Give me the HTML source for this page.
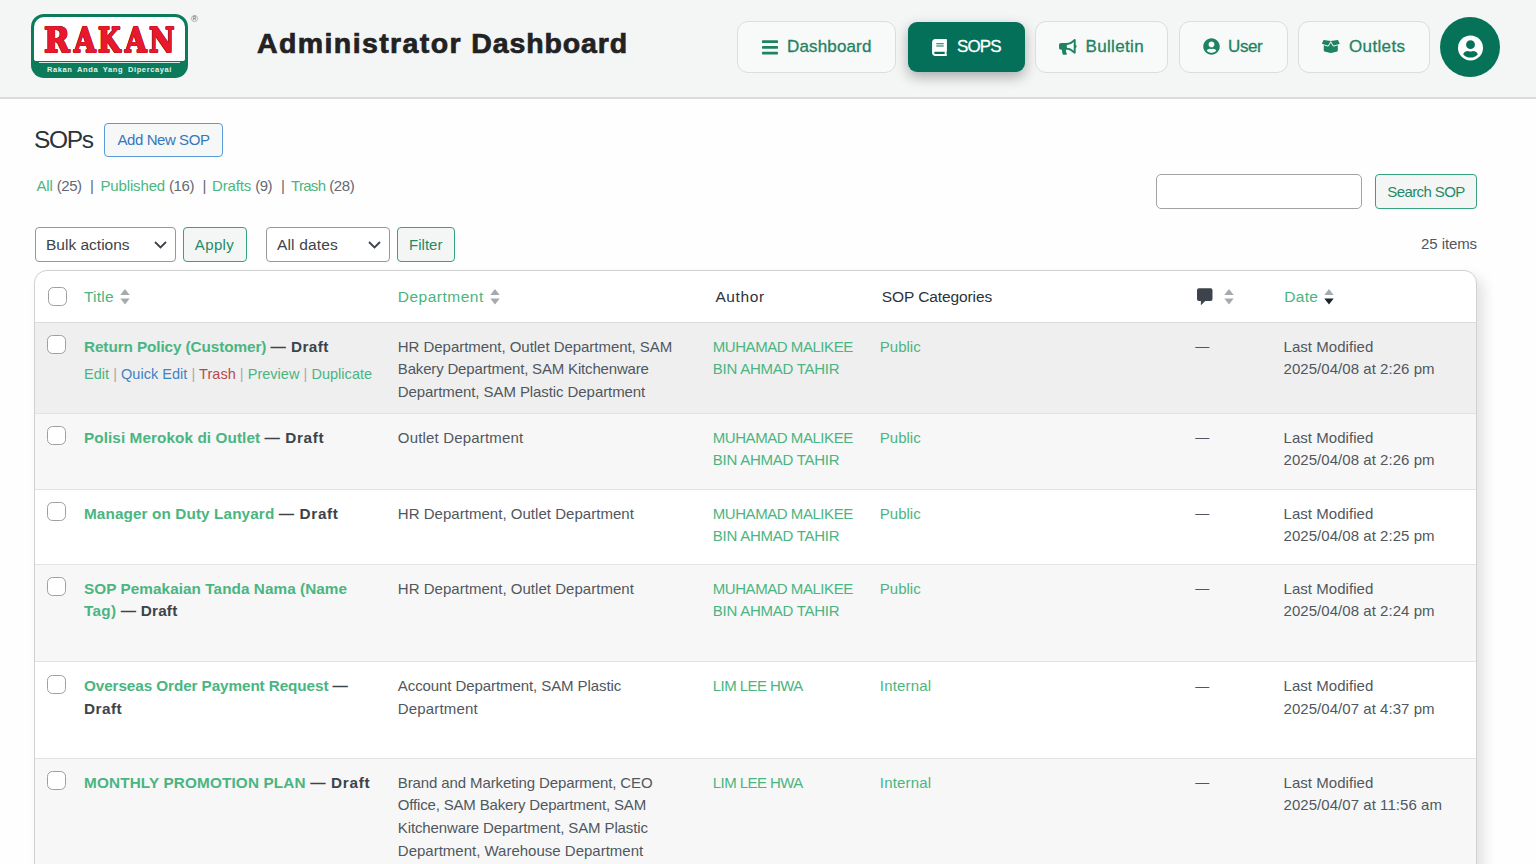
<!DOCTYPE html>
<html lang="en">
<head>
<meta charset="utf-8">
<title>SOPs - Administrator Dashboard</title>
<style>
*{box-sizing:border-box;margin:0;padding:0}
html,body{width:1536px;height:864px;overflow:hidden;background:#fefefe}
body{font-family:"Liberation Sans",sans-serif;font-size:15px;color:#3c434a;position:relative}
a{text-decoration:none;color:inherit}
header{position:absolute;left:0;top:0;width:1536px;height:99px;background:#f4f5f5;border-bottom:2px solid #dadbdb}
.logo{position:absolute;left:31px;top:13.500px;width:157px;height:64px;border-radius:13px;background:#0b7b5c}
.logo .plate{position:absolute;left:3px;top:3px;right:3px;height:44px;background:#fff;border-radius:10px 10px 2px 2px}
.logo .name{position:absolute;left:0;top:4.600px;width:157px;height:44px;font-family:"DejaVu Serif",serif;font-weight:700;font-size:34px;line-height:44px;color:#e8192c;white-space:nowrap;-webkit-text-stroke:1.300px #e8192c;text-shadow:.9px 0 0 #7c1220,-.9px 0 0 #7c1220,0 .8px 0 #7c1220,0 -.8px 0 #7c1220,.6px .6px 0 #7c1220,-.6px .6px 0 #7c1220,.6px -.6px 0 #7c1220,-.6px -.6px 0 #7c1220}
.logo .name i{position:absolute;top:0;font-style:normal;transform-origin:0 0}
.logo .rule{position:absolute;left:8px;right:8px;top:48.300px;height:1.500px;background:#d4e9e1}
.logo .tag{position:absolute;left:0;top:51.500px;width:157px;text-align:center;font-size:7.500px;line-height:10px;font-weight:700;color:#e3f1ec;letter-spacing:.62px;white-space:nowrap;word-spacing:2px}
.reg{position:absolute;left:191px;top:13px;font-size:9.500px;color:#666}
.brand{position:absolute;left:257px;top:22.700px;font-size:28.5px;line-height:40px;font-weight:700;color:#222;white-space:nowrap;letter-spacing:1.2px;-webkit-text-stroke:.7px #222}
nav a{position:absolute;top:21px;height:52px;border:1px solid #dcdddd;border-radius:11px;background:#f8f9f9;color:#1f8363;font-size:17px;line-height:50px;white-space:nowrap}
nav a span{position:absolute;top:0;-webkit-text-stroke:.3px currentColor}
nav a svg{position:absolute}
nav a.on{top:22px;height:50px;border:none;background:#05705a;color:#fff;box-shadow:0 5px 13px rgba(0,0,0,.3);border-radius:9px}
.avatar{position:absolute;left:1440px;top:17px;width:60px;height:60px;border-radius:50%;background:#067358}
.avatar svg{position:absolute;left:17.5px;top:18px}
main h1{position:absolute;left:34px;top:122px;font-size:24.5px;line-height:36px;font-weight:400;color:#2c3338;letter-spacing:-1.35px}
.add{position:absolute;left:104px;top:123px;width:119px;height:34px;border:1.5px solid #5a9ad8;border-radius:4px;background:#f6f7f7;color:#3577bd;font-size:15px;line-height:31px;text-align:center;letter-spacing:-.43px}
.subsubsub{position:absolute;left:0;top:175px;list-style:none;font-size:15px;line-height:22px;color:#646970;white-space:nowrap;letter-spacing:-.15px}
.subsubsub li{position:absolute;top:0}
.subsubsub a{color:#4ab581}
.subsubsub span{letter-spacing:-.45px}
.subsubsub i{font-style:normal;position:absolute;top:0}
.search input{position:absolute;left:1156px;top:174px;width:205.500px;height:34.500px;border:1px solid #a0a3a6;border-radius:5px;background:#fff}
.btn{position:absolute;height:35px;border:1.5px solid #36a181;border-radius:4px;background:#f4f6f5;color:#1f8a68;font-size:15px;line-height:34px;text-align:center;white-space:nowrap}
.sel{position:absolute;top:227px;height:34.500px;border:1px solid #95989c;border-radius:4px;background:#fff;color:#3c434a;font-size:15.500px;line-height:34px;padding-left:10px;white-space:nowrap}
.sel svg{position:absolute;top:13px}
.count{position:absolute;right:59px;top:233px;font-size:15px;line-height:22px;color:#50575e;letter-spacing:-.1px}
.tbl{position:absolute;left:34px;top:269.500px;width:1443px;height:620px;border:1px solid #d0d1d3;border-radius:13px 13px 0 0;background:#fff;box-shadow:7px 7px 13px rgba(0,0,0,.11);overflow:hidden}
table{border-collapse:collapse;table-layout:fixed;width:1441px;font-size:15px;line-height:22.600px}
th{height:52px;text-align:left;font-weight:400;font-size:15.500px;color:#2c3338;padding:2px 0 0 12.500px;border-bottom:1px solid #dcdcde;white-space:nowrap;vertical-align:middle;position:relative}
th a{color:#4ab581}
td{vertical-align:top;padding:12.800px 0 0 12.500px;white-space:nowrap;border-bottom:1px solid #e2e3e4;color:#50575e}
td a{color:#4ab581}
tr.alt td{background:#f7f7f7}
tr.hov td{background:#efeff0}
.cb{display:block;width:19px;height:19px;border:1.300px solid #9c9fa3;border-radius:5.500px;background:#fff}
td.c{padding:12.400px 0 0 12.200px}
th.c{padding:0 0 0 12.500px}
td:nth-child(3),td:nth-child(4),td:nth-child(5){padding-left:11.800px}
td:nth-child(6){font-size:14px;padding-left:12.300px;padding-top:12.300px}
.t{font-weight:700;color:#3aab7a;font-size:15.300px}
.t b{color:#3c434a}
.ra{font-size:14.500px;color:#a7aaad;display:block;margin-top:5px;font-weight:400;letter-spacing:.03px}
.ra .q{color:#3f83c4}
.ra .d{color:#b8494b}
.dt{letter-spacing:.05px}
.srt{display:inline-block;width:10px;height:16px;vertical-align:-3px;margin-left:6px}
</style>
</head>
<body>
<header>
  <a class="logo"><span class="plate"></span><span class="name"><i style="left:13.300px;transform:scaleX(.91)">R</i><i style="left:43px;transform:scaleX(.82)">A</i><i style="left:67px;transform:scaleX(.76)">K</i><i style="left:94.300px;transform:scaleX(.82)">A</i><i style="left:118.300px;transform:scaleX(.82)">N</i></span><span class="rule"></span><span class="tag">Rakan Anda Yang Dipercayai</span></a>
  <span class="reg">®</span>
  <h1 class="brand"><span style="letter-spacing:1.400px">Administrator</span> <span style="letter-spacing:.9px">Dashboard</span></h1>
  <nav>
    <a style="left:737px;width:159px"><svg style="left:24px;top:17.500px" width="17" height="15" viewBox="0 0 17 15"><g fill="#1f8363"><rect x="0" y="0.3" width="16" height="2.7" rx=".6"/><rect x="0" y="6" width="16" height="2.7" rx=".6"/><rect x="0" y="11.7" width="16" height="2.7" rx=".6"/></g></svg><span style="left:49px;letter-spacing:.15px">Dashboard</span></a>
    <a class="on" style="left:908px;width:117px"><svg style="left:24px;top:16.5px" width="15" height="17" viewBox="0 0 448 512"><path fill="#fff" d="M448 360V24c0-13.300-10.700-24-24-24H96C43 0 0 43 0 96v320c0 53 43 96 96 96h328c13.300 0 24-10.700 24-24v-16c0-7.500-3.500-14.300-8.900-18.700-4.200-15.400-4.200-59.300 0-74.700 5.400-4.300 8.900-11.100 8.900-18.600zM128 134c0-3.300 2.700-6 6-6h212c3.300 0 6 2.700 6 6v20c0 3.300-2.700 6-6 6H134c-3.300 0-6-2.700-6-6v-20zm0 64c0-3.300 2.700-6 6-6h212c3.300 0 6 2.700 6 6v20c0 3.300-2.700 6-6 6H134c-3.300 0-6-2.700-6-6v-20zm253.400 250H96c-17.700 0-32-14.300-32-32 0-17.600 14.400-32 32-32h285.400c-1.900 17.100-1.900 46.900 0 64z"/></svg><span style="left:49px;letter-spacing:-.9px">SOPS</span></a>
    <a style="left:1035px;width:133px"><svg style="left:23.200px;top:17.200px" width="17.700" height="15.700" viewBox="0 0 576 512"><path fill="#1f8363" d="M576 240c0-23.630-12.950-44.040-32-55.120V32.010C544 23.260 537.020 0 512 0c-7.120 0-14.190 2.380-19.980 7.020l-85.030 68.030C364.280 109.190 310.660 128 256 128H64c-35.350 0-64 28.650-64 64v96c0 35.350 28.650 64 64 64h33.700c-1.390 10.480-2.180 21.140-2.180 32 0 39.770 9.260 77.350 25.560 110.940 5.190 10.690 16.520 17.060 28.400 17.060h74.280c26.050 0 41.690-29.840 25.900-50.560-16.400-21.520-26.150-48.360-26.150-77.440 0-11.110 1.620-21.790 4.410-32H256c54.660 0 108.280 18.810 150.980 52.950l85.030 68.030a32.023 32.023 0 0 0 19.980 7.020c24.920 0 32-22.780 32-32V295.130C563.050 284.040 576 263.630 576 240zm-96 141.420l-33.050-26.440C392.950 311.780 325.120 288 256 288v-96c69.120 0 136.950-23.780 190.950-66.980L480 98.580v282.840z"/></svg><span style="left:49.500px;letter-spacing:.35px">Bulletin</span></a>
    <a style="left:1179px;width:109px"><svg style="left:22.700px;top:15.600px" width="17" height="17" viewBox="0 0 496 512"><path fill="#1f8363" d="M248 8C111 8 0 119 0 256s111 248 248 248 248-111 248-248S385 8 248 8zm0 96c48.600 0 88 39.400 88 88s-39.400 88-88 88-88-39.400-88-88 39.400-88 88-88zm0 344c-58.700 0-111.300-26.600-146.500-68.200 18.800-35.400 55.600-59.800 98.500-59.800 2.400 0 4.800.4 7.100 1.100 13 4.200 26.600 6.900 40.900 6.900 14.300 0 28-2.700 40.900-6.900 2.300-.7 4.700-1.100 7.100-1.100 42.900 0 79.700 24.400 98.500 59.800C359.300 421.400 306.700 448 248 448z"/></svg><span style="left:48px;letter-spacing:-.4px">User</span></a>
    <a style="left:1298px;width:132px"><svg style="left:23px;top:18.100px" width="17.600" height="13" viewBox="0 32 640 448" preserveAspectRatio="none"><path fill="#1f8363" d="M425.700 256c-16.900 0-32.800-9-41.400-23.400L320 126l-64.200 106.600c-8.700 14.500-24.600 23.500-41.500 23.500-4.500 0-9-.6-13.300-1.900L64 215v178c0 14.700 10 27.500 24.200 31l216.200 54.100c10.200 2.500 20.900 2.500 31 0L551.800 424c14.200-3.600 24.200-16.400 24.200-31V215l-137 39.100c-4.300 1.300-8.800 1.900-13.300 1.900zm212.600-112.200L586.800 41c-3.100-6.200-9.800-9.800-16.700-8.900L320 64l91.700 152.100c3.800 6.300 11.400 9.300 18.500 7.300l197.900-56.500c9.900-2.900 14.700-13.900 10.200-23.100zM53.200 41L1.700 143.800c-4.600 9.200.3 20.200 10.100 23l197.900 56.500c7.100 2 14.700-1 18.500-7.300L320 64 69.800 32.100c-6.900-.8-13.500 2.700-16.600 8.900z"/></svg><span style="left:50px;letter-spacing:.35px">Outlets</span></a>
  </nav>
  <a class="avatar"><svg width="25" height="25.800" viewBox="0 0 496 512"><circle cx="248" cy="256" r="248" fill="#fff"/><circle cx="248" cy="192" r="88" fill="#067358"/><path fill="#067358" d="M248 448c-58.700 0-111.300-26.600-146.500-68.200 18.800-35.400 55.600-59.800 98.500-59.800 2.400 0 4.800.4 7.100 1.100 13 4.200 26.600 6.900 40.900 6.900 14.300 0 28-2.700 40.900-6.900 2.300-.7 4.700-1.100 7.100-1.100 42.900 0 79.700 24.400 98.500 59.800C359.300 421.400 306.700 448 248 448z"/></svg></a>
</header>
<main>
  <h1>SOPs</h1>
  <a class="add">Add New SOP</a>
  <ul class="subsubsub"><li style="left:36.500px"><a>All</a> <span>(25)</span><i style="left:53.500px">|</i></li><li style="left:100.500px"><a>Published</a> <span>(16)</span><i style="left:102px">|</i></li><li style="left:212px"><a>Drafts</a> <span>(9)</span><i style="left:69px">|</i></li><li style="left:291px"><a style="letter-spacing:-.7px">Trash</a> <span>(28)</span></li></ul>

  <form class="search"><input type="text" aria-label="Search SOP"><a class="btn" style="left:1375px;top:173.500px;width:102px;letter-spacing:-.6px">Search SOP</a></form>
  <div class="tablenav">
    <div class="sel" style="left:35px;width:140.500px">Bulk actions<svg style="left:118px"  width="13" height="8" viewBox="0 0 13 8"><path d="M1 1l5.500 5.500L12 1" fill="none" stroke="#3c434a" stroke-width="1.800"/></svg></div>
    <a class="btn" style="left:182.500px;top:227px;width:64px;letter-spacing:.35px">Apply</a>
    <div class="sel" style="left:266px;width:123.500px;letter-spacing:.15px">All dates<svg style="left:101px"  width="13" height="8" viewBox="0 0 13 8"><path d="M1 1l5.500 5.500L12 1" fill="none" stroke="#3c434a" stroke-width="1.800"/></svg></div>
    <a class="btn" style="left:397px;top:227px;width:57.500px">Filter</a>
    <span class="count">25 items</span>
  </div>
  <div class="tbl"><table>
    <colgroup><col style="width:36.500px"><col style="width:314.500px"><col style="width:315px"><col style="width:167px"><col style="width:315px"><col style="width:88px"><col style="width:205px"></colgroup>
    <thead><tr>
      <th class="c"><span class="cb"></span></th>
      <th><a style="letter-spacing:.2px">Title</a><svg class="srt" viewBox="0 0 10 16"><path d="M5 0l4.700 6H.3z" fill="#a7aaad"/><path d="M5 15.500l4.700-6H.3z" fill="#a7aaad"/></svg></th>
      <th style="padding-left:11.800px"><a style="letter-spacing:.5px">Department</a><svg class="srt" viewBox="0 0 10 16"><path d="M5 0l4.700 6H.3z" fill="#a7aaad"/><path d="M5 15.500l4.700-6H.3z" fill="#a7aaad"/></svg></th>
      <th style="padding-left:14.400px;letter-spacing:.6px">Author</th>
      <th style="padding-left:13.800px;letter-spacing:-.1px">SOP Categories</th>
      <th style="padding-left:14px"><svg width="15.500" height="18" viewBox="0 0 16 18" style="vertical-align:-4px"><path fill="#3c434a" d="M2 0h12a2 2 0 0 1 2 2v9a2 2 0 0 1-2 2H8.500L4 17.500V13H2a2 2 0 0 1-2-2V2a2 2 0 0 1 2-2z"/></svg><svg class="srt" style="margin-left:11.500px" viewBox="0 0 10 16"><path d="M5 0l4.700 6H.3z" fill="#a7aaad"/><path d="M5 15.500l4.700-6H.3z" fill="#a7aaad"/></svg></th>
      <th style="padding-left:13.300px"><a style="letter-spacing:.3px">Date</a><svg class="srt" viewBox="0 0 10 16"><path d="M5 0l4.700 6H.3z" fill="#a7aaad"/><path d="M5 15.500l4.700-6H.3z" fill="#1d2327"/></svg></th>
    </tr></thead>
    <tbody>
      <tr class="hov" style="height:91px"><td class="c"><span class="cb"></span></td><td><strong class="t" style="letter-spacing:-.09px"><a>Return Policy (Customer)</a> <b style="letter-spacing:.45px">— Draft</b></strong><span class="ra"><a>Edit</a> | <a class="q">Quick Edit</a> | <a class="d">Trash</a> | <a>Preview</a> | <a>Duplicate</a></span></td><td><span style="letter-spacing:-.04px">HR Department, Outlet Department, SAM</span><br><span style="letter-spacing:-.17px">Bakery Department, SAM Kitchenware</span><br><span style="letter-spacing:-.08px">Department, SAM Plastic Department</span></td><td><a><span style="letter-spacing:-.45px">MUHAMAD MALIKEE</span><br><span style="letter-spacing:-.25px">BIN AHMAD TAHIR</span></a></td><td><a>Public</a></td><td>—</td><td class="dt">Last Modified<br>2025/04/08 at 2:26 pm</td></tr>
      <tr class="alt" style="height:75.8px"><td class="c"><span class="cb"></span></td><td><strong class="t" style="letter-spacing:.08px"><a>Polisi Merokok di Outlet</a> <b style="letter-spacing:.62px">— Draft</b></strong></td><td><span style="letter-spacing:.18px">Outlet Department</span></td><td><a><span style="letter-spacing:-.45px">MUHAMAD MALIKEE</span><br><span style="letter-spacing:-.25px">BIN AHMAD TAHIR</span></a></td><td><a>Public</a></td><td>—</td><td class="dt">Last Modified<br>2025/04/08 at 2:26 pm</td></tr>
      <tr class="" style="height:75.3px"><td class="c"><span class="cb"></span></td><td><strong class="t" style="letter-spacing:.11px"><a>Manager on Duty Lanyard</a> <b style="letter-spacing:.65px">— Draft</b></strong></td><td><span style="letter-spacing:.03px">HR Department, Outlet Department</span></td><td><a><span style="letter-spacing:-.45px">MUHAMAD MALIKEE</span><br><span style="letter-spacing:-.25px">BIN AHMAD TAHIR</span></a></td><td><a>Public</a></td><td>—</td><td class="dt">Last Modified<br>2025/04/08 at 2:25 pm</td></tr>
      <tr class="alt" style="height:97.3px"><td class="c"><span class="cb"></span></td><td><strong class="t" style="letter-spacing:.06px"><a>SOP Pemakaian Tanda Nama (Name<br><span style="letter-spacing:.28px">Tag)</span></a><span style="letter-spacing:.28px"> <b style="letter-spacing:.2px">— Draft</b></span></strong></td><td><span style="letter-spacing:.03px">HR Department, Outlet Department</span></td><td><a><span style="letter-spacing:-.45px">MUHAMAD MALIKEE</span><br><span style="letter-spacing:-.25px">BIN AHMAD TAHIR</span></a></td><td><a>Public</a></td><td>—</td><td class="dt">Last Modified<br>2025/04/08 at 2:24 pm</td></tr>
      <tr class="" style="height:96.7px"><td class="c"><span class="cb"></span></td><td><strong class="t" style="letter-spacing:-.10px"><a>Overseas Order Payment Request</a> <b style="letter-spacing:.44px">—<br><span style="letter-spacing:.5px">Draft</span></b></strong></td><td><span style="letter-spacing:-.08px">Account Department, SAM Plastic</span><br><span style="letter-spacing:.16px">Department</span></td><td><a><span style="letter-spacing:-.56px">LIM LEE HWA</span></a></td><td><a><span style="letter-spacing:.18px">Internal</span></a></td><td>—</td><td class="dt">Last Modified<br>2025/04/07 at 4:37 pm</td></tr>
      <tr class="alt" style="height:120px"><td class="c"><span class="cb"></span></td><td><strong class="t" style="letter-spacing:.15px"><a>MONTHLY PROMOTION PLAN</a> <b style="letter-spacing:.69px">— Draft</b></strong></td><td><span style="letter-spacing:-.11px">Brand and Marketing Deparment, CEO</span><br><span style="letter-spacing:-.17px">Office, SAM Bakery Department, SAM</span><br><span style="letter-spacing:-.12px">Kitchenware Department, SAM Plastic</span><br>Department, Warehouse Department</td><td><a><span style="letter-spacing:-.56px">LIM LEE HWA</span></a></td><td><a><span style="letter-spacing:.18px">Internal</span></a></td><td>—</td><td class="dt">Last Modified<br>2025/04/07 at 11:56 am</td></tr>
    </tbody>
  </table></div>
</main>
</body>
</html>
